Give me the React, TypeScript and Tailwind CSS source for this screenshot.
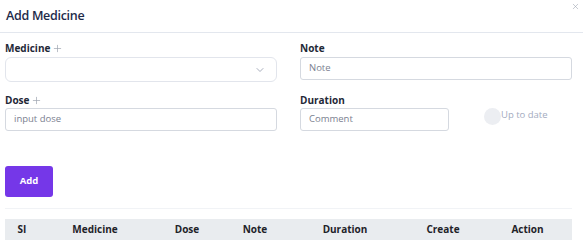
import { ChevronDown, Plus, X } from "lucide-react";

const columns = [
  { label: "SI", w: "w-[34px]" },
  { label: "Medicine", w: "w-[112px]" },
  { label: "Dose", w: "w-[72px]" },
  { label: "Note", w: "w-[64px]" },
  { label: "Duration", w: "w-[116px]" },
  { label: "Create", w: "w-[80px]" },
  { label: "Action", w: "w-[89px]" },
];

export default function App() {
  return (
    <div className="h-[244px] w-[583px] overflow-hidden bg-white font-['Open_Sans',sans-serif] text-[#1f2937]">
      {/* Header */}
      <div className="relative flex h-[33px] items-center border-b border-[#e3e7ee] px-[6px]">
        <h1 className="text-[12.5px] font-semibold tracking-[-0.3px] text-[#1e2b4a]">Add Medicine</h1>
        <X className="absolute right-[3px] top-[2px] h-[9px] w-[9px] text-[#9ca3af]" strokeWidth={1.5} />
      </div>

      {/* Form */}
      <div className="px-[5px] pt-[9px]">
        <div className="grid grid-cols-[272px_272px] gap-x-[23px] gap-y-[12px]">
          <div>
            <label className="flex h-[12px] items-center gap-[2px] text-[10px] font-bold">
              Medicine <Plus className="h-[11px] w-[11px] text-[#9ca3af]" strokeWidth={1.5} />
            </label>
            <div className="mt-[3px] flex h-[25px] items-center justify-end rounded-[6px] border border-[#e2e5ec] pr-[10px]">
              <ChevronDown className="h-[12px] w-[12px] text-[#8b93a7]" strokeWidth={1.5} />
            </div>
          </div>
          <div>
            <label className="flex h-[12px] items-center text-[10px] font-bold">Note</label>
            <div className="mt-[3px] flex h-[23px] items-center rounded-[3px] border border-[#d5d9e0] px-[8px] text-[9.5px] text-[#7b8190]">
              Note
            </div>
          </div>
          <div>
            <label className="flex h-[12px] items-center gap-[2px] text-[10px] font-bold">
              Dose <Plus className="h-[11px] w-[11px] text-[#9ca3af]" strokeWidth={1.5} />
            </label>
            <div className="mt-[2px] flex h-[23px] items-center rounded-[3px] border border-[#d5d9e0] px-[8px] text-[9.5px] text-[#7b8190]">
              input dose
            </div>
          </div>
          <div>
            <label className="flex h-[12px] items-center text-[10px] font-bold">Duration</label>
            <div className="mt-[2px] flex items-start">
              <div className="flex h-[23px] w-[149px] items-center rounded-[3px] border border-[#d5d9e0] px-[8px] text-[9.5px] text-[#7b8190]">
                Comment
              </div>
              <div className="ml-[35px] flex items-start">
                <span className="h-[17px] w-[17px] rounded-full bg-[#eceef2]" />
                <span className="mt-[0px] text-[9.5px] leading-[14px] text-[#a3abc0]">Up to date</span>
              </div>
            </div>
          </div>
        </div>

        <button className="mt-[35px] h-[31px] w-[48px] rounded-[3px] bg-[#7537e8] text-[9.5px] font-bold text-white">
          Add
        </button>

        <div className="mt-[11px] h-px w-[567px] bg-[#f1f3f6]" />

        <table className="mt-[10px] w-[567px] table-fixed border-collapse">
          <thead>
            <tr className="h-[21px] bg-[#e9ecef]">
              {columns.map((c) => (
                <th key={c.label} className={`${c.w} text-center text-[10px] font-bold text-[#1f2329]`}>
                  {c.label}
                </th>
              ))}
            </tr>
          </thead>
        </table>
      </div>
    </div>
  );
}
